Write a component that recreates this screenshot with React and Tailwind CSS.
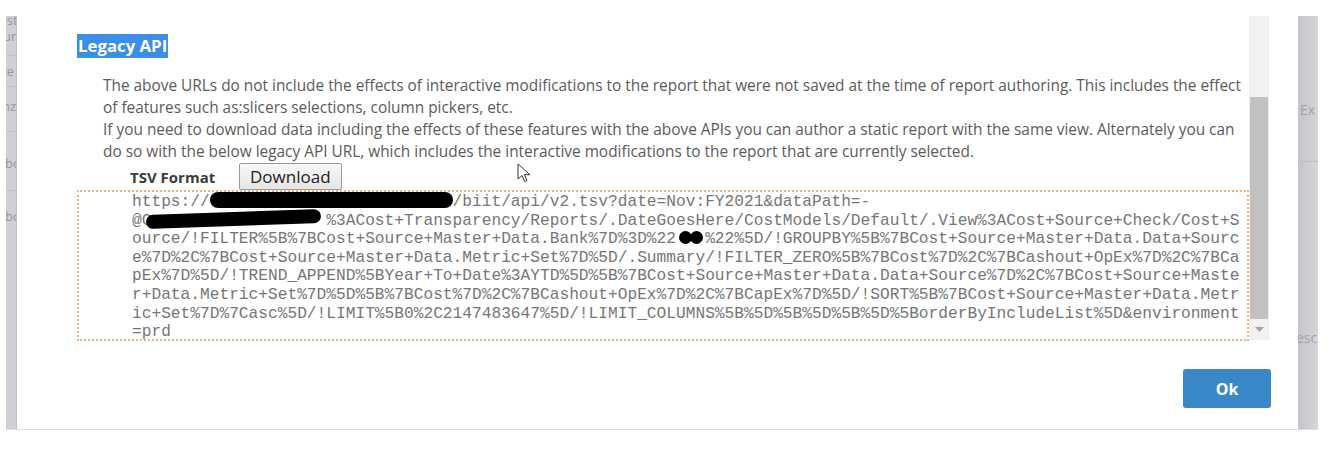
import React from 'react';

const sans = { fontFamily: '"Open Sans", "Noto Sans", sans-serif' };

// the visible lines of the legacy URL textarea, with redacted parts
const urlLines = [
  ['https://', { blob: 25 }, '/biit/api/v2.tsv?date=Nov:FY2021&dataPath=-'],
  ['@C', { blob: 18 }, '%3ACost+Transparency/Reports/.DateGoesHere/CostModels/Default/.View%3ACost+Source+Check/Cost+S'],
  ['ource/!FILTER%5B%7BCost+Source+Master+Data.Bank%7D%3D%22', { dots: 3 }, '%22%5D/!GROUPBY%5B%7BCost+Source+Master+Data.Data+Sourc'],
  ['e%7D%2C%7BCost+Source+Master+Data.Metric+Set%7D%5D/.Summary/!FILTER_ZERO%5B%7BCost%7D%2C%7BCashout+OpEx%7D%2C%7BCa'],
  ['pEx%7D%5D/!TREND_APPEND%5BYear+To+Date%3AYTD%5D%5B%7BCost+Source+Master+Data.Data+Source%7D%2C%7BCost+Source+Maste'],
  ['r+Data.Metric+Set%7D%5D%5B%7BCost%7D%2C%7BCashout+OpEx%7D%2C%7BCapEx%7D%5D/!SORT%5B%7BCost+Source+Master+Data.Metr'],
  ['ic+Set%7D%7Casc%5D/!LIMIT%5B0%2C2147483647%5D/!LIMIT_COLUMNS%5B%5D%5B%5D%5B%5D%5BorderByIncludeList%5D&environment'],
  ['=prd'],
];

const UrlPart = ({ part }) => {
  if (typeof part === 'string') return <span>{part}</span>;
  if (part.blob === 25) {
    return <span className="inline-block align-middle w-[25ch] h-[16px] -mt-[4px] bg-black rounded-full" />;
  }
  if (part.blob === 18) {
    return <span className="inline-block align-middle w-[18ch] h-[14px] -ml-[5px] mr-[5px] -mt-[2px] bg-black rounded-full -rotate-2" />;
  }
  return (
    <span className="inline-flex w-[3ch] items-center justify-center align-middle -mt-[2px]">
      <span className="w-[13px] h-[13px] rounded-full bg-black" />
      <span className="w-[13px] h-[13px] rounded-full bg-black -ml-[2px]" />
    </span>
  );
};

// dimmed page behind the dialog, only its edges show
const LeftStrip = () => (
  <div className="w-[11px] shrink-0 flex flex-col bg-[#cfd0d5] text-[#95959a] text-[13px] leading-[15px] overflow-hidden border-r border-[#bfc0c4]" style={sans}>
    <div className="-ml-[7px] mt-[-3px] whitespace-nowrap">ost</div>
    <div className="-ml-[3px] mt-[1px] whitespace-nowrap">ur</div>
    <div className="h-[12px] border-b border-[#c2c3c8]" />
    <div className="-ml-[4px] mt-[8px] whitespace-nowrap">te</div>
    <div className="h-[8px] border-b border-[#c2c3c8]" />
    <div className="-ml-[4px] mt-[12px] whitespace-nowrap">nz</div>
    <div className="h-[18px] border-b border-[#c2c3c8]" />
    <div className="-ml-[1px] mt-[24px] whitespace-nowrap">bo</div>
    <div className="h-[20px] border-b border-[#c2c3c8]" />
    <div className="-ml-[1px] mt-[18px] whitespace-nowrap">bo</div>
  </div>
);

const RightStrip = () => (
  <div className="w-[20px] shrink-0 flex flex-col bg-gradient-to-r from-[#c4c5ca] to-[#d6d7db] text-[#a2a3a8] text-[14px] leading-[16px] overflow-hidden" style={sans}>
    <div className="mt-[86px] pl-[2px] whitespace-nowrap">Ex</div>
    <div className="h-[44px] border-b border-[#bcbdc2]" />
    <div className="mt-[168px] -ml-[2px] whitespace-nowrap">escr</div>
  </div>
);

export default function App() {
  return (
    <div className="w-[1330px] h-[454px] bg-white overflow-hidden relative">
      <div className="flex mt-[16px] ml-[6px] w-[1312px] h-[414px] border-b border-[#dedede]">
        <LeftStrip />

        {/* modal */}
        <div className="flex-1 flex flex-col bg-white">
          <div className="flex h-[326px]">
            <div className="flex-1 overflow-hidden pl-[60px] pt-[18px]" style={sans}>
              <div>
                <span className="inline-block bg-[#3a8ee8] text-white font-bold text-[16.8px] leading-[24px] px-[1px]">
                  Legacy API
                </span>
              </div>
              <div className="pl-[26px] pt-[17px] text-[#5b5b5b] text-[15.4px] leading-[22px] whitespace-nowrap">
                <div>The above URLs do not include the effects of interactive modifications to the report that were not saved at the time of report authoring. This includes the effect</div>
                <div>of features such as:slicers selections, column pickers, etc.</div>
                <div>If you need to download data including the effects of these features with the above APIs you can author a static report with the same view. Alternately you can</div>
                <div>do so with the below legacy API URL, which includes the interactive modifications to the report that are currently selected.</div>
              </div>
              <div className="flex items-center pl-[53px] h-[27px]">
                <span className="font-bold text-[15px] text-[#3b3b3b] w-[109px] mt-[2px]">TSV Format</span>
                <button className="h-[27px] px-[10px] border border-[#9a9a9a] rounded-[2px] bg-gradient-to-b from-[#f8f8f8] to-[#e6e6e6] text-[17px] leading-[24px] text-[#222]">
                  Download
                </button>
              </div>
              <div className="w-[1172px] h-[151px] border-[2px] border-dotted border-[#f5b17c] pl-[53px] pt-[1px] text-[#767676] text-[16.2px] leading-[18.6px] whitespace-pre"
                style={{ fontFamily: '"Liberation Mono", "Courier New", monospace' }}>
                {urlLines.map((line, i) => (
                  <div key={i}>
                    {line.map((p, j) => <UrlPart key={j} part={p} />)}
                  </div>
                ))}
              </div>
            </div>

            {/* scrollbar */}
            <div className="w-[20px] shrink-0 bg-[#f1f1f1] flex flex-col mr-[29px] mb-[2px]">
              <div className="h-[81px]" />
              <div className="h-[222px] mx-[1px] bg-[#c1c1c1]" />
              <div className="flex-1 flex items-center justify-center">
                <svg width="9" height="6" viewBox="0 0 9 6"><path d="M0 0h9L4.5 5z" fill="#a3a3a3" /></svg>
              </div>
            </div>
          </div>

          <div className="flex justify-end pr-[27px] pt-[27px]">
            <button className="w-[88px] h-[39px] rounded-[3px] bg-[#3b88c8] text-white font-bold text-[16px]" style={sans}>
              Ok
            </button>
          </div>
        </div>

        <RightStrip />
      </div>

      {/* mouse pointer */}
      <svg className="absolute left-[517px] top-[163px]" width="14" height="20" viewBox="0 0 14 20">
        <path d="M1 1v15l4-3.5 2.6 6 2.4-1-2.6-5.8H13z" fill="white" stroke="#333" strokeWidth="1" strokeLinejoin="round" />
      </svg>
    </div>
  );
}
